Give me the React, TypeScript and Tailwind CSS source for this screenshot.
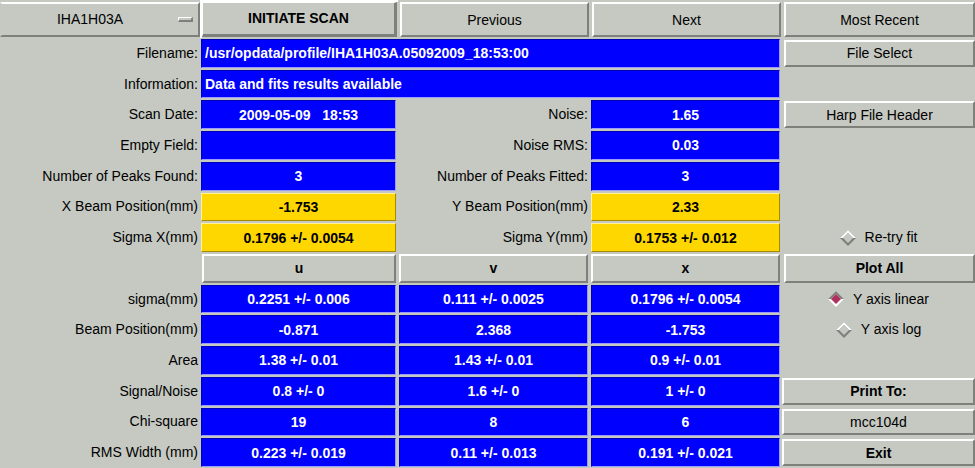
import type { ReactNode } from 'react';

// Motif-style harp scan panel

const BTN =
  'flex items-center justify-center bg-[#c5c9c2] border-2 border-t-white border-l-white border-b-[#7e807c] border-r-[#7e807c] text-[14px] text-black leading-none';

function Btn({ children, bold = false, className = '' }: { children?: ReactNode; bold?: boolean; className?: string }) {
  return (
    <div className={`${BTN} ${bold ? 'font-bold' : ''} ${className}`}>
      <span>{children}</span>
    </div>
  );
}

function Label({ children }: { children: ReactNode }) {
  return (
    <div className="flex items-center justify-end pr-[2px] text-[14px] text-black whitespace-nowrap">
      {children}
    </div>
  );
}

function Field({
  children,
  yellow = false,
  left = false,
  className = '',
}: {
  children?: ReactNode;
  yellow?: boolean;
  left?: boolean;
  className?: string;
}) {
  const tone = yellow
    ? 'bg-[#ffd700] text-black border-t-[#fff39a] border-l-[#fff39a] border-b-[#a48a00] border-r-[#a48a00]'
    : 'bg-[#0000ff] text-white border-t-[#0000b4] border-l-[#0000b4] border-b-[#9a9aff] border-r-[#9a9aff]';
  return (
    <div className={`py-px pl-px pr-[2px] ${className}`}>
      <div
        className={`h-full flex items-center border text-[14px] font-bold whitespace-pre leading-none ${tone} ${
          left ? 'justify-start pl-[3px]' : 'justify-center'
        }`}
      >
        {children}
      </div>
    </div>
  );
}

function Diamond({ checked }: { checked: boolean }) {
  const upper = checked ? '#7e807c' : '#ffffff';
  const lower = checked ? '#ffffff' : '#7e807c';
  return (
    <svg width="16" height="16" viewBox="0 0 16 16" className="shrink-0">
      <polygon points="8,0 16,8 8,16 0,8" fill={lower} />
      <polygon points="0,8 8,0 16,8 13,8 8,3 3,8" fill={upper} />
      <polygon points="8,3 13,8 8,13 3,8" fill={checked ? '#b03060' : '#c5c9c2'} />
    </svg>
  );
}

function Radio({ label, checked = false }: { label: string; checked?: boolean }) {
  return (
    <div className="flex items-center justify-center gap-[9px] text-[14px] text-black">
      <Diamond checked={checked} />
      <span>{label}</span>
    </div>
  );
}

const stats = [
  { label: 'sigma(mm)', u: '0.2251 +/- 0.006', v: '0.111 +/- 0.0025', x: '0.1796 +/- 0.0054' },
  { label: 'Beam Position(mm)', u: '-0.871', v: '2.368', x: '-1.753' },
  { label: 'Area', u: '1.38 +/- 0.01', v: '1.43 +/- 0.01', x: '0.9 +/- 0.01' },
  { label: 'Signal/Noise', u: '0.8 +/- 0', v: '1.6 +/- 0', x: '1 +/- 0' },
  { label: 'Chi-square', u: '19', v: '8', x: '6' },
  { label: 'RMS Width (mm)', u: '0.223 +/- 0.019', v: '0.11 +/- 0.013', x: '0.191 +/- 0.021' },
];

function rightCell(i: number) {
  switch (i) {
    case 0:
      return <Radio label="Y axis linear" checked />;
    case 1:
      return <Radio label="Y axis log" />;
    case 3:
      return <Btn bold className="my-[2px]">Print To:</Btn>;
    case 4:
      return <Btn className="my-[2px]">mcc104d</Btn>;
    case 5:
      return <Btn bold className="my-[2px]">Exit</Btn>;
    default:
      return <div />;
  }
}

export default function App() {
  return (
    <div className="w-[975px] h-[468px] overflow-hidden bg-[#c5c9c2] font-['Liberation_Sans',Arial,sans-serif] grid grid-cols-[200px_198px_192px_192px_193px] grid-rows-[38px_repeat(14,minmax(0,1fr))]">
      {/* top bar */}
      <div className="flex items-center bg-[#c5c9c2] border-2 border-t-white border-l-[#c5c9c2] border-b-[#7e807c] border-r-[#7e807c] mt-[2px] mb-px text-[14px]">
        <span className="flex-1 text-center">IHA1H03A</span>
        <span className="w-[15px] h-[5px] mr-[5px] bg-[#c5c9c2] border-t border-l border-t-white border-l-white border-b-2 border-r-2 border-b-[#7e807c] border-r-[#7e807c]" />
      </div>
      <div className="border-t-2 border-l-2 border-white pb-px pr-px">
        <div className="h-full flex items-center justify-center bg-[#c5c9c2] border-t border-l border-white border-b-[3px] border-r-[3px] border-b-[#7e807c] border-r-[#7e807c] text-[14px] font-bold">
          INITIATE SCAN
        </div>
      </div>
      <Btn className="mt-[2px] mb-px ml-[2px] mr-px">Previous</Btn>
      <Btn className="mt-[2px] mb-px ml-[2px] mr-px">Next</Btn>
      <Btn className="mt-[2px] mb-px ml-[2px]">Most Recent</Btn>

      {/* filename / info */}
      <Label>Filename:</Label>
      <Field left className="col-span-3">/usr/opdata/profile/IHA1H03A.05092009_18:53:00</Field>
      <Btn className="my-[2px] ml-[2px]">File Select</Btn>

      <Label>Information:</Label>
      <Field left className="col-span-3">Data and fits results available</Field>
      <div />

      {/* scan summary */}
      <Label>Scan Date:</Label>
      <Field>2009-05-09   18:53</Field>
      <Label>Noise:</Label>
      <Field>1.65</Field>
      <Btn className="my-[2px] ml-[2px]">Harp File Header</Btn>

      <Label>Empty Field:</Label>
      <Field />
      <Label>Noise RMS:</Label>
      <Field>0.03</Field>
      <div />

      <Label>Number of Peaks Found:</Label>
      <Field>3</Field>
      <Label>Number of Peaks Fitted:</Label>
      <Field>3</Field>
      <div />

      <Label>X Beam Position(mm)</Label>
      <Field yellow>-1.753</Field>
      <Label>Y Beam Position(mm)</Label>
      <Field yellow>2.33</Field>
      <div />

      <Label>Sigma X(mm)</Label>
      <Field yellow>0.1796 +/- 0.0054</Field>
      <Label>Sigma Y(mm)</Label>
      <Field yellow>0.1753 +/- 0.012</Field>
      <Radio label="Re-try fit" />

      {/* per-plane table */}
      <div />
      <Btn bold className="my-px ml-[2px] mr-[2px]">u</Btn>
      <Btn bold className="my-px ml-px mr-[2px]">v</Btn>
      <Btn bold className="my-px ml-px mr-[2px]">x</Btn>
      <Btn bold className="my-px ml-[2px]">Plot All</Btn>

      {stats.map((r, i) => (
        <div key={r.label} className="contents">
          <Label>{r.label}</Label>
          <Field>{r.u}</Field>
          <Field>{r.v}</Field>
          <Field>{r.x}</Field>
          {rightCell(i)}
        </div>
      ))}
    </div>
  );
}
